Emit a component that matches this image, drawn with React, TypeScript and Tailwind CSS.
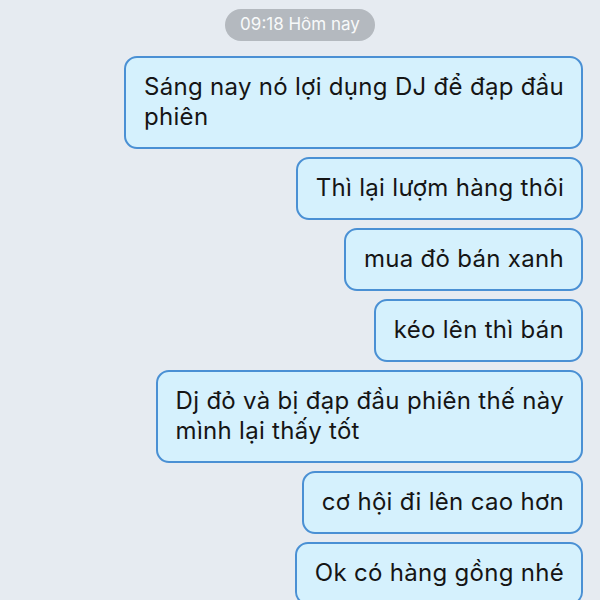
import React from "react";

const msgs: string[][] = [
  ["Sáng nay nó lợi dụng DJ để đạp đầu", "phiên"],
  ["Thì lại lượm hàng thôi"],
  ["mua đỏ bán xanh"],
  ["kéo lên thì bán"],
  ["Dj đỏ và bị đạp đầu phiên thế này", "mình lại thấy tốt"],
  ["cơ hội đi lên cao hơn"],
  ["Ok có hàng gồng nhé"],
];

export default function App() {
  return (
    <div
      className="w-[600px] h-[600px] overflow-hidden bg-[#e6ebf1] flex flex-col"
      style={{ fontFamily: "Inter, 'Noto Sans', sans-serif" }}
    >
      <div className="flex justify-center pt-[9px] pb-[15px]">
        <div className="h-[32px] px-[15px] rounded-full bg-[#b4b9bf] text-[#f8f9fa] text-[17px] flex items-center">
          09:18 Hôm nay
        </div>
      </div>
      <div className="flex flex-col items-end gap-[8px] pr-[17px]">
        {msgs.map((lines, i) => (
          <div
            key={i}
            className="whitespace-nowrap rounded-[13px] border-2 border-[#4a90d4] bg-[#d5f1fd] pl-[18px] pr-[17px] pt-[14px] pb-[15px] text-[24px] leading-[30px] tracking-[0.3px] text-[#151515]"
          >
            {lines.map((l, j) => (
              <div key={j}>{l}</div>
            ))}
          </div>
        ))}
      </div>
    </div>
  );
}
